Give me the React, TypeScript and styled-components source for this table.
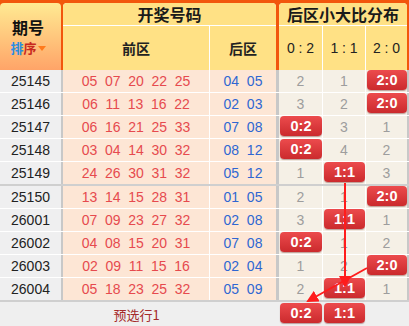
import React from "react";
import styled, { createGlobalStyle } from "styled-components";

type Row = {
  issue: string;
  front: string[];
  back: string[];
  dist: (number | null)[];
  hit: number;
};

const LABELS = ["0:2", "1:1", "2:0"];

const rows: Row[] = [
  { issue: "25145", front: ["05", "07", "20", "22", "25"], back: ["04", "05"], dist: [2, 1, null], hit: 2 },
  { issue: "25146", front: ["06", "11", "13", "16", "22"], back: ["02", "03"], dist: [3, 2, null], hit: 2 },
  { issue: "25147", front: ["06", "16", "21", "25", "33"], back: ["07", "08"], dist: [null, 3, 1], hit: 0 },
  { issue: "25148", front: ["03", "04", "14", "30", "32"], back: ["08", "12"], dist: [null, 4, 2], hit: 0 },
  { issue: "25149", front: ["24", "26", "30", "31", "32"], back: ["05", "12"], dist: [1, null, 3], hit: 1 },
  { issue: "25150", front: ["13", "14", "15", "28", "31"], back: ["01", "05"], dist: [2, 1, null], hit: 2 },
  { issue: "26001", front: ["07", "09", "23", "27", "32"], back: ["02", "08"], dist: [3, null, 1], hit: 1 },
  { issue: "26002", front: ["04", "08", "15", "20", "31"], back: ["07", "08"], dist: [null, 1, 2], hit: 0 },
  { issue: "26003", front: ["02", "09", "11", "15", "16"], back: ["02", "04"], dist: [1, 2, null], hit: 2 },
  { issue: "26004", front: ["05", "18", "23", "25", "32"], back: ["05", "09"], dist: [2, null, 1], hit: 1 },
];

const GlobalStyle = createGlobalStyle`
  body {
    margin: 0;
    background: #ffffff;
    font-family: "Liberation Sans", "Noto Sans CJK SC", sans-serif;
  }
`;

const Wrap = styled.div`
  position: relative;
  width: 409px;
`;

const Head = styled.div`
  display: flex;
  background: #f2560c;
  padding-top: 3px;
  height: 67px;
`;

const IssueHead = styled.div`
  width: 61px;
  margin-right: 2px;
  border-radius: 4px 4px 0 0;
  background: linear-gradient(#ffea92, #ffa468);
  display: flex;
  flex-direction: column;
  align-items: center;
  justify-content: center;
  padding-right: 5px;
  box-sizing: border-box;
`;

const IssueTitle = styled.div`
  font-family: "Noto Sans CJK SC", sans-serif;
  font-weight: 700;
  font-size: 16px;
  line-height: 20px;
  color: #111;
`;

const Sort = styled.div`
  font-family: "Noto Sans CJK SC", sans-serif;
  font-weight: 700;
  font-size: 13px;
  line-height: 16px;
  margin-top: 3px;
  display: flex;
  align-items: center;
`;

const SortChar = styled.span<{ $c: string }>`
  color: ${(p) => p.$c};
`;

const Caret = styled.span`
  width: 0;
  height: 0;
  margin-left: 1px;
  border-left: 4px solid transparent;
  border-right: 4px solid transparent;
  border-top: 5px solid #ff7a1c;
`;

const Group = styled.div<{ $w: number; $gap: number }>`
  width: ${(p) => p.$w}px;
  margin-right: ${(p) => p.$gap}px;
  border-radius: 4px 4px 0 0;
  overflow: hidden;
  background: #ffffff;
  display: grid;
  grid-template-rows: 22px 44px;
  row-gap: 1px;
`;

const GroupTitle = styled.div`
  background: #ffe185;
  font-family: "Noto Sans CJK SC", sans-serif;
  font-weight: 700;
  font-size: 16px;
  line-height: 22px;
  color: #1a1a1a;
  text-align: center;
`;

const SubRow = styled.div<{ $cols: string }>`
  display: grid;
  grid-template-columns: ${(p) => p.$cols};
  column-gap: 1px;
`;

const SubCell = styled.div<{ $bold?: boolean }>`
  background: #ffe185;
  display: flex;
  align-items: center;
  justify-content: center;
  font-family: ${(p) => (p.$bold ? `"Noto Sans CJK SC", sans-serif` : `"Liberation Sans", sans-serif`)};
  font-weight: ${(p) => (p.$bold ? 700 : 400)};
  font-size: 14px;
  color: #222;
  white-space: pre;
`;

const Line = styled.div<{ $sep?: boolean }>`
  display: grid;
  grid-template-columns: 63px 147px 69px 44px 43px 43px;
  height: 22px;
  border-bottom: ${(p) => (p.$sep ? "2px solid #cfcfcf" : "1px solid #ffffff")};
`;

const Cell = styled.div<{ $bg: string; $edge: string }>`
  background: ${(p) => p.$bg};
  border-right: ${(p) => p.$edge};
  display: flex;
  justify-content: center;
  align-items: center;
  font-size: 14px;
  line-height: 22px;
  position: relative;
`;

const Issue = styled.span`
  color: #222;
`;

const Nums = styled.div<{ $color: string }>`
  display: flex;
  gap: 7.7px;
  color: ${(p) => p.$color};
`;

const Count = styled.span`
  color: #9d9d9d;
`;

const Badge = styled.div`
  position: absolute;
  top: 0;
  left: 1px;
  right: 0;
  height: 20px;
  border-radius: 4px;
  background: linear-gradient(#ec4b4d, #cb2a2d);
  box-shadow: 0 1px 1px rgba(90, 0, 0, 0.35);
  color: #ffffff;
  font-weight: 700;
  font-size: 14.5px;
  line-height: 20px;
  text-align: center;
`;

const Foot = styled.div`
  display: grid;
  grid-template-columns: 63px 147px 69px 44px 43px 43px;
  height: 26px;
  background: #efefef;
`;

const FootCell = styled.div`
  position: relative;
  display: flex;
  align-items: center;
  justify-content: center;
`;

const FootText = styled.span`
  font-family: "Noto Sans CJK SC", sans-serif;
  font-size: 13px;
  color: #a52a2a;
  margin-top: -2px;
`;

const FootBadge = styled(Badge)`
  top: 1px;
  right: 1px;
`;

const Arrows = styled.svg`
  position: absolute;
  left: 0;
  top: 0;
  pointer-events: none;
`;

const edges = [
  "2px solid #c8c8c8",
  "1px solid #ffffff",
  "3px solid #c8c8c8",
  "1px solid #ffffff",
  "1px solid #ffffff",
  "2px solid #c8c8c8",
];

export default function App() {
  return (
    <>
      <GlobalStyle />
      <Wrap>
        <Head>
          <IssueHead>
            <IssueTitle>期号</IssueTitle>
            <Sort>
              <SortChar $c="#2b8de0">排</SortChar>
              <SortChar $c="#c9281e">序</SortChar>
              <Caret />
            </Sort>
          </IssueHead>
          <Group $w={213} $gap={3}>
            <GroupTitle>开奖号码</GroupTitle>
            <SubRow $cols="146px 66px">
              <SubCell $bold>前区</SubCell>
              <SubCell $bold>后区</SubCell>
            </SubRow>
          </Group>
          <Group $w={128} $gap={2}>
            <GroupTitle>后区小大比分布</GroupTitle>
            <SubRow $cols="43px 42px 41px">
              <SubCell>0 : 2</SubCell>
              <SubCell>1 : 1</SubCell>
              <SubCell>2 : 0</SubCell>
            </SubRow>
          </Group>
        </Head>

        {rows.map((r, i) => (
          <Line key={r.issue} $sep={i === 4 || i === 9}>
            <Cell $bg="#efeff0" $edge={edges[0]}>
              <Issue>{r.issue}</Issue>
            </Cell>
            <Cell $bg="#fde6d5" $edge={edges[1]}>
              <Nums $color="#e64a4e">
                {r.front.map((n, k) => (
                  <span key={k}>{n}</span>
                ))}
              </Nums>
            </Cell>
            <Cell $bg="#fde6d5" $edge={edges[2]}>
              <Nums $color="#2f66d2">
                {r.back.map((n, k) => (
                  <span key={k}>{n}</span>
                ))}
              </Nums>
            </Cell>
            {r.dist.map((v, k) => (
              <Cell key={k} $bg="#f5f0e6" $edge={edges[3 + k]}>
                {k === r.hit ? <Badge>{LABELS[k]}</Badge> : <Count>{v}</Count>}
              </Cell>
            ))}
          </Line>
        ))}

        <Foot>
          <FootCell />
          <FootCell>
            <FootText>预选行1</FootText>
          </FootCell>
          <FootCell />
          <FootCell>
            <FootBadge>0:2</FootBadge>
          </FootCell>
          <FootCell>
            <FootBadge>1:1</FootBadge>
          </FootCell>
          <FootCell />
        </Foot>

        <Arrows width="409" height="326" viewBox="0 0 409 326">
          <defs>
            <marker id="head" markerWidth="6" markerHeight="6" refX="5" refY="3" orient="auto" markerUnits="strokeWidth">
              <path d="M0,0 L6,3 L0,6 Z" fill="#ff1c1c" />
            </marker>
          </defs>
          <line x1="345" y1="183" x2="345" y2="286" stroke="#ff1c1c" strokeWidth="2" markerEnd="url(#head)" />
          <line x1="367" y1="268" x2="308" y2="301" stroke="#ff1c1c" strokeWidth="2" markerEnd="url(#head)" />
        </Arrows>
      </Wrap>
    </>
  );
}
